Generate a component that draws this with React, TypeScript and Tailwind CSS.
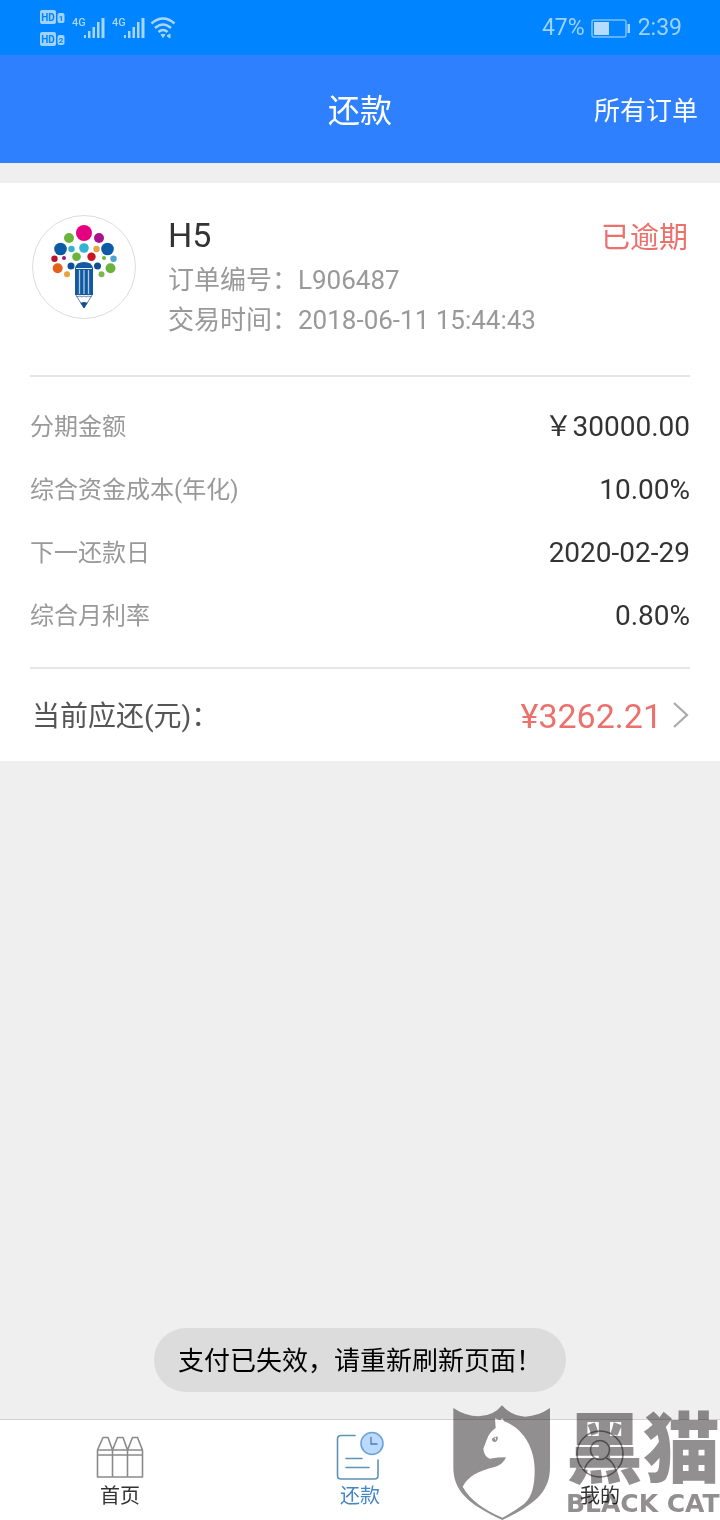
import type { ReactNode } from "react";

const details = [
  { label: "分期金额", value: "￥30000.00" },
  { label: "综合资金成本(年化)", value: "10.00%" },
  { label: "下一还款日", value: "2020-02-29" },
  { label: "综合月利率", value: "0.80%" },
];

const dots: [number, number, number, string][] = [
  [60, 28, 8, "#e4007f"],
  [45, 33, 5, "#6ab43e"],
  [75, 33, 5, "#a8128a"],
  [36.5, 44, 6.3, "#0c5ba6"],
  [47.5, 44, 3.2, "#35b3cd"],
  [60, 43, 4.8, "#35b3d3"],
  [72.5, 44, 3.2, "#e8a33d"],
  [83.5, 44, 6.3, "#0c5ba6"],
  [30.5, 53.7, 3.2, "#b5162e"],
  [40, 53, 2, "#8e1c7c"],
  [52.5, 51.7, 4.3, "#6ab43e"],
  [67.5, 51.7, 4.2, "#cc1420"],
  [80, 53, 2, "#6ab43e"],
  [89.5, 53.7, 3.2, "#4aa5d2"],
  [33.7, 63.3, 5, "#e2611d"],
  [47, 61, 3.5, "#0f4f94"],
  [73.5, 61, 3.5, "#0f4f94"],
  [86.5, 63.3, 5, "#6ab43e"],
  [43, 69.3, 3, "#e8a33d"],
  [77.5, 69.3, 3, "#7cb850"],
];

function HdBadge({ sim }: { sim: string }) {
  return (
    <svg width="26" height="16" viewBox="0 0 26 16" aria-hidden="true">
      <rect x="0" y="1" width="16" height="14" rx="2" fill="#9fd2ff" />
      <text x="8" y="12" textAnchor="middle" fontSize="10" fontWeight="700" fill="#0084ff">HD</text>
      <rect x="17.5" y="4" width="7" height="10" rx="2" fill="#9fd2ff" />
      <text x="21" y="12" textAnchor="middle" fontSize="8" fontWeight="700" fill="#0084ff">{sim}</text>
    </svg>
  );
}

function Signal() {
  return (
    <svg width="34" height="26" viewBox="0 0 34 26" fill="#a8d6ff" aria-hidden="true">
      <text x="0" y="11" fontSize="11" fontWeight="500">4G</text>
      <rect x="12" y="20" width="2" height="3" />
      <rect x="16" y="16" width="2.5" height="7" />
      <rect x="20.5" y="12" width="2.5" height="11" />
      <rect x="25" y="7" width="2.5" height="16" />
      <rect x="29.5" y="3" width="3" height="20" />
    </svg>
  );
}

function StatusBar() {
  return (
    <div className="flex h-[55px] items-center justify-between bg-[#0084ff] pl-10 pr-[38px] text-[23px] text-[#9fd2ff]">
      <div className="flex items-center">
        <div className="flex flex-col gap-[6px]">
          <HdBadge sim="1" />
          <HdBadge sim="2" />
        </div>
        <div className="ml-[6px] flex gap-[6px]">
          <Signal />
          <Signal />
        </div>
        <svg className="ml-[4px]" width="26" height="24" viewBox="0 0 26 24" fill="none" stroke="#a8d6ff" strokeWidth="2.6" aria-hidden="true">
          <path d="M1.500 7.500Q13-2.500 24.500 7.500M5 12Q13 5 21 12M8.500 16Q13 12 17.500 16" />
          <path d="M11 18.500h4l-2 3zM17 20l3-2v4z" fill="#a8d6ff" strokeWidth="1" />
        </svg>
      </div>
      <div className="flex items-center pt-[2px]">
        <span>47%</span>
        <svg className="ml-[6px] mr-[7px]" width="40" height="20" viewBox="0 0 40 20" aria-hidden="true">
          <rect x="1" y="1" width="34" height="17" rx="2" fill="none" stroke="#7cc0ff" strokeWidth="1.500" />
          <rect x="3" y="3" width="15" height="13" fill="#b5dcff" />
          <rect x="36.500" y="5" width="2.500" height="9" fill="#a8d6ff" />
        </svg>
        <span>2:39</span>
      </div>
    </div>
  );
}

function MerchantLogo() {
  return (
    <svg className="shrink-0" width="104" height="104" viewBox="8 10 104 104" role="img" aria-label="H5">
      <circle cx="60" cy="62" r="51.500" fill="#fff" stroke="#dcdcdc" />
      {dots.map(([cx, cy, r, fill]) => (
        <circle key={`${cx}-${cy}`} cx={cx} cy={cy} r={r} fill={fill} />
      ))}
      <path d="M51 63Q52 57 60 57Q68 57 69 63V90H51Z" fill="#14599f" />
      <path d="M52 63.500H68" stroke="#e7f0f8" strokeWidth="1" />
      <path d="M55.500 65V89M60 65V89M64.500 65V89" stroke="#a9cdea" strokeWidth="1.300" />
      <path d="M52 90.500L60 103L68 90.500Q66 93 64 91Q62 93 60 91Q58 93 56 91Q54 93 52 90.500Z" fill="#fff" stroke="#456b91" strokeWidth=".8" />
      <path d="M56.500 98Q60 96 63.500 98L60 103.500Z" fill="#14508f" />
    </svg>
  );
}

function CrayonsIcon() {
  return (
    <svg width="48" height="44" viewBox="0 0 48 44" fill="none" stroke="#8a8a8a" strokeWidth="1.600" strokeLinejoin="round" aria-hidden="true">
      <path d="M1.500 14V41H46.500V14M16.500 14V41M31.500 14V41M1.500 14H46.500M1.500 19H46.500" />
      <path d="M1.500 14L7 1.500H12L16.500 14L21.500 1.500H27L31.500 14L36.500 1.500H41.500L46.500 14" />
    </svg>
  );
}

function BillIcon() {
  return (
    <svg width="48" height="50" viewBox="0 0 48 50" fill="none" stroke="#5c94b5" strokeWidth="1.600" strokeLinecap="round" aria-hidden="true">
      <path d="M19 5.500H5Q1.500 5.500 1.500 9V45.500Q1.500 49 5 49H38.500Q42 49 42 45.500V30M10 28.500H26M10 37.500H33" />
      <circle cx="36" cy="13.500" r="11" fill="#bcd9ff" stroke="#6aa3dc" />
      <path d="M35 7.500V14H41" stroke="#4b7eac" strokeWidth="1.300" />
    </svg>
  );
}

function PersonIcon() {
  return (
    <svg width="50" height="50" viewBox="0 0 50 50" fill="none" stroke="#888" strokeWidth="1.600" aria-hidden="true">
      <circle cx="25" cy="24" r="23" />
      <circle cx="25" cy="20" r="9.500" />
      <path d="M9 40Q13 30 19 28M31 28Q37 30 41 40" />
    </svg>
  );
}

function Tab({ label, icon, active = false }: { label: string; icon: ReactNode; active?: boolean }) {
  return (
    <a
      href="#"
      aria-current={active ? "page" : undefined}
      className={`flex flex-1 flex-col items-center text-[20px] leading-6 ${active ? "text-[#4586c6]" : "text-[#333]"}`}
    >
      <span className="flex h-[64px] items-end justify-center pb-1">{icon}</span>
      {label}
    </a>
  );
}

function Watermark() {
  return (
    <div className="pointer-events-none absolute bottom-0 right-0 flex gap-[14px] text-[#918f90] mix-blend-multiply">
      <svg width="100" height="116" viewBox="30 26 300 348" fill="currentColor" aria-hidden="true">
        <path
          fillRule="evenodd"
          d="M34 38Q70 62 110 63Q155 62 180 30Q208 62 250 64Q290 62 324 38V215C324 285 285 325 181 374C75 325 34 285 34 215ZM159 69L161 98Q141 111 134 134L124 160Q126 183 143 190Q168 186 192 186Q184 207 161 214Q82 231 62 274Q92 329 181 367Q214 350 246 326C272 302 278 268 278 223C278 153 239 95 186 78L181 69L174 75Z"
        />
        <path d="M149 131Q164 119 168 126Q166 141 157 140Q150 139 149 131Z" />
        <path d="M158 128L163 126L160 136Z" fill="#fff" />
      </svg>
      <div className="flex flex-col pt-[6px]">
        <span className="text-[77px] font-black leading-[82px]">黑猫</span>
        <span className="font-['DejaVu_Sans',sans-serif] text-[25px] font-bold leading-6">BLACK CAT</span>
      </div>
    </div>
  );
}

export default function App() {
  return (
    <div className="relative flex min-h-screen flex-col bg-[#efefef] font-[Roboto,'Noto_Sans_CJK_SC',sans-serif] text-[#333]">
      <StatusBar />
      <header className="grid h-[108px] grid-cols-3 items-center bg-[#2f80ff] px-[22px] pt-1 text-white">
        <h1 className="col-start-2 text-center text-[32px]">还款</h1>
        <a href="#" className="justify-self-end text-[26px]">所有订单</a>
      </header>

      <main className="flex flex-1 flex-col pt-5">
        <section className="bg-white px-[30px]">
          <div className="flex h-[194px] gap-8 border-b-2 border-[#e6e6e6] pl-[2px] pt-8">
            <MerchantLogo />
            <div className="flex-1">
              <div className="flex h-10 items-center justify-between">
                <h2 className="text-[34px]">H5</h2>
                <span className="pr-[2px] pt-2 text-[29px] text-[#ec716c]">已逾期</span>
              </div>
              <div className="pt-[5px] text-[26px] leading-10 text-[#999]">
                <p>订单编号：L906487</p>
                <p>交易时间：2018-06-11 15:44:43</p>
              </div>
            </div>
          </div>

          <dl className="border-b-2 border-[#e6e6e6] pb-[20px] pt-[18px]">
            {details.map((item) => (
              <div key={item.label} className="flex h-[63px] items-center justify-between">
                <dt className="text-[24px] text-[#999]">{item.label}</dt>
                <dd className="text-[28px]">{item.value}</dd>
              </div>
            ))}
          </dl>

          <a href="#" className="flex h-[92px] items-center">
            <span className="flex-1 pl-[2px] pt-1 text-[28px] text-[#555]">当前应还(元)：</span>
            <span className="pt-[2px] text-[34px] text-[#ec716c]">¥3262.21</span>
            <svg className="ml-[10px]" width="18" height="28" viewBox="0 0 18 28" fill="none" stroke="#aaa" strokeWidth="2.200" aria-hidden="true">
              <path d="M2 2L15 14L2 26" />
            </svg>
          </a>
        </section>

        <div role="status" className="mx-auto mb-[27px] mt-auto flex h-16 items-center rounded-full bg-[#dcdcdc] px-6 pt-[3px] text-[26px] text-black">
          支付已失效，请重新刷新页面！
        </div>
      </main>

      <nav className="flex h-[101px] border-t border-[#d2d2d2] bg-white">
        <Tab label="首页" icon={<CrayonsIcon />} />
        <Tab label="还款" icon={<BillIcon />} active />
        <Tab label="我的" icon={<PersonIcon />} />
      </nav>
      <Watermark />
    </div>
  );
}
